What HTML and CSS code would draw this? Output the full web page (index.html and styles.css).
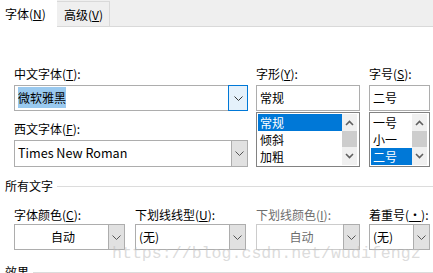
FILE: index.html
```html
<!DOCTYPE html>
<html lang="zh-CN">
<head>
    <meta charset="UTF-8">
    <title>字体</title>
    <link rel="stylesheet" href="styles.css">
</head>
<body>
    <div class="dialog">
        <!-- tabs -->
        <div class="tabs">
            <div class="tab active">字体(<u>N</u>)</div>
            <div class="tab">高级(<u>V</u>)</div>
        </div>

        <div class="fonts">
            <div class="col col-wide">
                <label class="lbl">中文字体(<u>T</u>):</label>
                <div class="combo focus">
                    <span class="value"><span class="sel-text">微软雅黑</span></span>
                    <span class="drop"><svg width="9" height="5" viewBox="0 0 9 5"><path d="M0.5 0.5 L4.5 4.5 L8.5 0.5" fill="none" stroke="#333" stroke-width="1"/></svg></span>
                </div>
                <label class="lbl lbl-gap">西文字体(<u>F</u>):</label>
                <div class="combo tall">
                    <span class="value latin">Times New Roman</span>
                    <span class="drop"><svg width="9" height="5" viewBox="0 0 9 5"><path d="M0.5 0.5 L4.5 4.5 L8.5 0.5" fill="none" stroke="#555" stroke-width="1"/></svg></span>
                </div>
            </div>

            <div class="col col-mid">
                <label class="lbl">字形(<u>Y</u>):</label>
                <div class="textbox">常规</div>
                <div class="listbox">
                    <ul class="items">
                        <li class="selected">常规</li>
                        <li>倾斜</li>
                        <li>加粗</li>
                    </ul>
                    <div class="scroll">
                        <span class="arrow"><svg width="9" height="6" viewBox="0 0 9 6"><path d="M1 5 L4.5 1.5 L8 5" fill="none" stroke="#606060" stroke-width="1.6"/></svg></span>
                        <span class="thumb"></span>
                        <span class="arrow"><svg width="9" height="6" viewBox="0 0 9 6"><path d="M1 1 L4.5 4.5 L8 1" fill="none" stroke="#606060" stroke-width="1.6"/></svg></span>
                    </div>
                </div>
            </div>

            <div class="col col-small">
                <label class="lbl">字号(<u>S</u>):</label>
                <div class="textbox">二号</div>
                <div class="listbox">
                    <ul class="items">
                        <li>一号</li>
                        <li>小一</li>
                        <li class="selected">二号</li>
                    </ul>
                    <div class="scroll">
                        <span class="arrow"><svg width="9" height="6" viewBox="0 0 9 6"><path d="M1 5 L4.5 1.5 L8 5" fill="none" stroke="#606060" stroke-width="1.6"/></svg></span>
                        <span class="thumb"></span>
                        <span class="arrow"><svg width="9" height="6" viewBox="0 0 9 6"><path d="M1 1 L4.5 4.5 L8 1" fill="none" stroke="#606060" stroke-width="1.6"/></svg></span>
                    </div>
                </div>
            </div>
        </div>

        <div class="group-title"><span>所有文字</span></div>

        <div class="all-text">
            <div class="col col-color">
                <label class="lbl">字体颜色(<u>C</u>):</label>
                <div class="combo">
                    <span class="value center">自动</span>
                    <span class="drop"><svg width="9" height="5" viewBox="0 0 9 5"><path d="M0.5 0.5 L4.5 4.5 L8.5 0.5" fill="none" stroke="#555" stroke-width="1"/></svg></span>
                </div>
            </div>
            <div class="col col-line">
                <label class="lbl">下划线线型(<u>U</u>):</label>
                <div class="combo">
                    <span class="value">(无)</span>
                    <span class="drop"><svg width="9" height="5" viewBox="0 0 9 5"><path d="M0.5 0.5 L4.5 4.5 L8.5 0.5" fill="none" stroke="#555" stroke-width="1"/></svg></span>
                </div>
            </div>
            <div class="col col-mid">
                <label class="lbl disabled">下划线颜色(<u>I</u>):</label>
                <div class="combo off">
                    <span class="value center">自动</span>
                    <span class="drop"><svg width="9" height="5" viewBox="0 0 9 5"><path d="M0.5 0.5 L4.5 4.5 L8.5 0.5" fill="none" stroke="#555" stroke-width="1"/></svg></span>
                </div>
            </div>
            <div class="col col-small">
                <label class="lbl">着重号(<u>·</u>):</label>
                <div class="combo">
                    <span class="value">(无)</span>
                    <span class="drop"><svg width="9" height="5" viewBox="0 0 9 5"><path d="M0.5 0.5 L4.5 4.5 L8.5 0.5" fill="none" stroke="#555" stroke-width="1"/></svg></span>
                </div>
            </div>
        </div>

        <div class="group-title effect"><span>效果</span></div>

        <div class="watermark">https://blog.csdn.net/wudifengz</div>
    </div>
</body>
</html>
```

FILE: styles.css
```css
/* Word font dialog */
body {
    margin: 0;
    background-color: #ffffff;
    font-family: "Microsoft YaHei", "Noto Sans CJK SC", sans-serif;
    font-size: 12px;
    color: #000000;
}

.dialog {
    position: relative;
    width: 433px;
    height: 273px;
    overflow: hidden;
}

u {
    text-decoration: underline;
    text-underline-offset: 1px;
}

/* Tabs */
.tabs {
    display: flex;
    height: 26px;
    background-color: #efefef;
    border-bottom: 1px solid #d9d9d9;
}

.tab {
    width: 53px;
    height: 25px;
    margin-top: 1px;
    padding-left: 7px;
    line-height: 25px;
    border-top: 1px solid #d9d9d9;
    border-right: 1px solid #d9d9d9;
    box-sizing: border-box;
}

.tab.active {
    width: 57px;
    height: 27px;
    margin-top: 0;
    padding-left: 5px;
    background-color: #ffffff;
    border: none;
    line-height: 27px;
}

/* Font rows */
.fonts {
    display: flex;
    padding: 39px 0 0 14px;
}

.all-text {
    display: flex;
    padding: 13px 0 0 14px;
}

.col {
    display: flex;
    flex-direction: column;
}

.col-wide { width: 234px; margin-right: 8px; }
.col-mid { width: 104px; margin-right: 9px; }
.col-small { width: 61px; }
.col-color { width: 111px; margin-right: 10px; }
.col-line { width: 111px; margin-right: 10px; }

.lbl {
    height: 16px;
    line-height: 16px;
    margin-bottom: 3px;
}

.all-text .lbl {
    margin-bottom: 1px;
}

.lbl.disabled {
    color: #6d6d6d;
}

.lbl-gap {
    margin-top: 10px;
}

/* Combo boxes */
.combo {
    display: flex;
    height: 26px;
    border: 1px solid #adadad;
    box-sizing: border-box;
    background-color: #ffffff;
}

.combo.tall {
    height: 27px;
}

.combo .value {
    flex: 1;
    padding-left: 3px;
    line-height: 24px;
    white-space: nowrap;
}

.combo .value.center {
    text-align: center;
}

.combo .value.latin {
    font-size: 12.6px;
}

.sel-text {
    background-color: #99c9ef;
    padding: 2px 0;
}

.drop {
    display: flex;
    align-items: center;
    justify-content: center;
    width: 15px;
    margin: -1px -1px -1px 0;
    background-color: #e1e1e1;
    border: 1px solid #adadad;
}

.combo.focus .drop {
    width: 18px;
    background-color: #e5f1fb;
    border-color: #0078d7;
}

.combo.off {
    border-color: #cccccc;
}

.combo.off .value {
    color: #6d6d6d;
}

/* Text box and list box */
.textbox {
    height: 26px;
    border: 1px solid #adadad;
    box-sizing: border-box;
    padding-left: 3px;
    line-height: 24px;
}

.listbox {
    display: flex;
    height: 55px;
    margin-top: 1px;
    border: 1px solid #828282;
    box-sizing: border-box;
    padding: 1px 2px 1px 1px;
}

.items {
    flex: 1;
    list-style: none;
    margin: 0;
    padding: 0;
}

.items li {
    height: 17px;
    line-height: 17px;
    padding-left: 2px;
}

.items li.selected {
    background-color: #0078d7;
    color: #ffffff;
}

.scroll {
    display: flex;
    flex-direction: column;
    width: 15px;
    background-color: #f0f0f0;
}

.scroll .arrow {
    display: flex;
    align-items: center;
    justify-content: center;
    height: 17px;
}

.scroll .thumb {
    height: 16px;
    background-color: #cdcdcd;
}

/* Group titles */
.group-title {
    display: flex;
    align-items: center;
    margin-top: 11px;
    padding-left: 5px;
    height: 16px;
    line-height: 16px;
}

.group-title::after {
    content: "";
    flex: 1;
    height: 1px;
    margin-left: 4px;
    background-color: #dcdcdc;
}

.group-title.effect {
    margin-top: 14px;
}

/* Watermark overlay */
.watermark {
    position: absolute;
    left: 112px;
    top: 245px;
    font-family: "Liberation Mono", monospace;
    font-size: 16.6px;
    line-height: 18px;
    color: rgba(190, 190, 190, 0.55);
    white-space: nowrap;
    pointer-events: none;
}
```
